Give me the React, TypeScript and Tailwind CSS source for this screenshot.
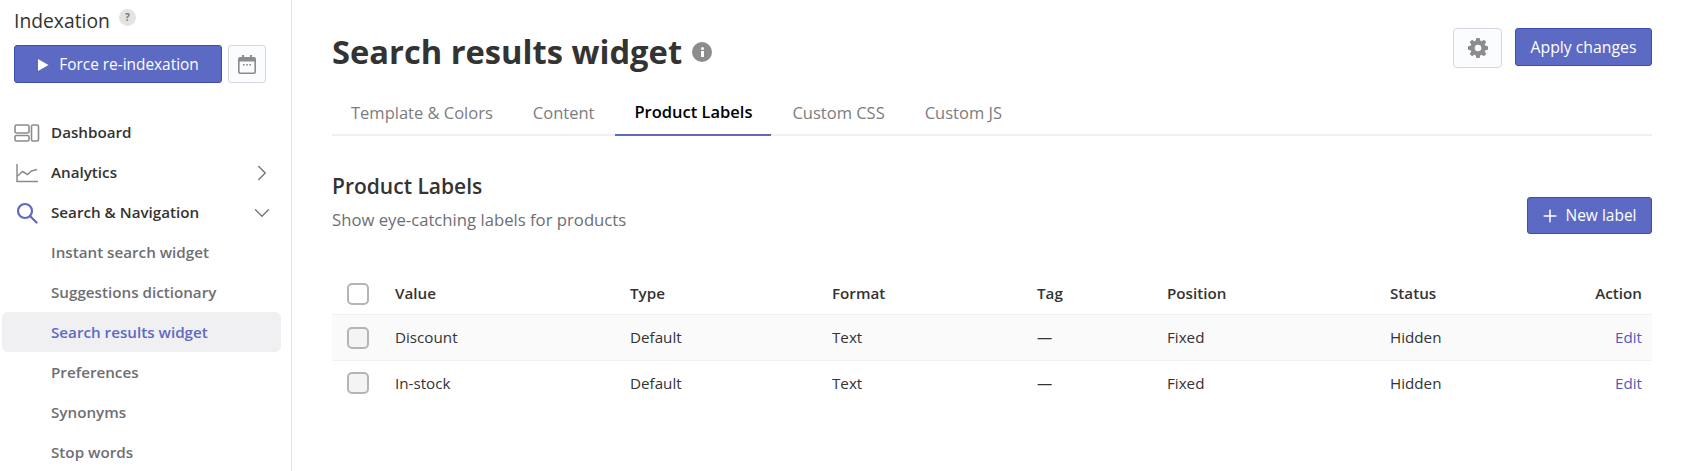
import React from "react";
import { ChevronDown, ChevronRight, Plus } from "lucide-react";

const tabs = ["Template & Colors", "Content", "Product Labels", "Custom CSS", "Custom JS"];
const subItems = ["Instant search widget", "Suggestions dictionary", "Search results widget", "Preferences", "Synonyms", "Stop words"];
const rows = [
  { value: "Discount", striped: true },
  { value: "In-stock", striped: false },
];
const tableCols = "grid grid-cols-[63px_235px_202px_205px_130px_223px_1fr_auto]";

function DashboardIcon() {
  return (
    <svg width="26" height="18" viewBox="0 0 26 18" fill="none" stroke="#8c8c8f" strokeWidth="1.6">
      <rect x="1" y="1" width="14" height="8" rx="1.5" />
      <rect x="1" y="11.5" width="14" height="5.5" rx="1.5" />
      <rect x="17.5" y="1" width="7" height="16" rx="1.5" />
    </svg>
  );
}

function AnalyticsIcon() {
  return (
    <svg width="24" height="20" viewBox="0 0 24 20" fill="none" stroke="#8c8c8f" strokeWidth="1.5">
      <path d="M2 1v17.5h21" />
      <path d="M2.5 13l5-4.5 5 3 4-3.5 5.5-1.5" />
    </svg>
  );
}

function SearchIcon() {
  return (
    <svg width="22" height="22" viewBox="0 0 22 22" fill="none" stroke="#5c6ac4" strokeWidth="2.2">
      <circle cx="9" cy="9" r="7" />
      <path d="M14 14l6.5 6.5" strokeLinecap="round" />
    </svg>
  );
}

function CalendarIcon() {
  return (
    <svg width="18" height="19" viewBox="0 0 18 19">
      <path d="M4 0h2v2h6V0h2v2h2a2 2 0 0 1 2 2v13a2 2 0 0 1-2 2H2a2 2 0 0 1-2-2V4a2 2 0 0 1 2-2h2z" fill="#8c8c8f" />
      <rect x="1.6" y="6.5" width="14.8" height="10.9" rx="0.6" fill="#fbfcfe" />
      <rect x="5" y="9" width="1.6" height="1.6" fill="#8c8c8f" />
      <rect x="8.2" y="9" width="1.6" height="1.6" fill="#8c8c8f" />
      <rect x="11.4" y="9" width="1.6" height="1.6" fill="#8c8c8f" />
    </svg>
  );
}

function GearIcon() {
  return (
    <svg width="20" height="20" viewBox="0 0 24 24" fill="#8c8c8f">
      <path
        fillRule="evenodd"
        d="M10 1h4l.6 3.1 1.9.8L19.1 3 22 5.9l-1.9 2.6.8 1.9L24 11v4l-3.1.6-.8 1.9 1.9 2.6L19.1 23l-2.6-1.9-1.9.8L14 25h-4l-.6-3.1-1.9-.8L4.9 23 2 20.1l1.9-2.6-.8-1.9L0 15v-4l3.1-.6.8-1.9L2 5.9 4.9 3l2.6 1.900 1.900-.8L10 1zm2 8a4 4 0 1 0 0 8 4 4 0 0 0 0-8z"
        transform="translate(0 -1)"
      />
    </svg>
  );
}

function Sidebar() {
  return (
    <aside className="w-[292px] h-[471px] shrink-0 overflow-hidden border-r border-[#e3e3e6]">
      <div className="pl-[14px] pt-[8px] flex items-start gap-[9px]">
        <span className="text-[19.3px] leading-[26px] text-[#333]">Indexation</span>
        <span className="mt-[1px] w-[17px] h-[17px] rounded-full bg-[#e3e3e3] text-[#777] text-[10px] font-bold flex items-center justify-center">?</span>
      </div>
      <div className="pl-[14px] mt-[11px] flex gap-[6px]">
        <button className="w-[208px] h-[38px] pt-[1px] rounded-[3px] bg-[#5c6ac4] border border-[#3f4eae] text-white text-[15.4px] flex items-center justify-center gap-[10px]">
          <svg width="12" height="14" viewBox="0 0 12 14" fill="#fff"><path d="M1 1v12l10.5-6z" /></svg>
          Force re-indexation
        </button>
        <button className="w-[38px] h-[38px] rounded-[3px] bg-[#fbfcfe] border border-[#d3d8e0] flex items-center justify-center">
          <CalendarIcon />
        </button>
      </div>
      <nav className="mt-[29px] text-[15.2px] font-semibold">
        <div className="h-[40px] pl-[14px] pt-[1px] flex items-center gap-[11px] text-[#333]">
          <span className="w-[26px] flex justify-center"><DashboardIcon /></span>
          Dashboard
        </div>
        <div className="h-[40px] pl-[14px] pr-[16px] pt-[1px] flex items-center gap-[11px] text-[#333]">
          <span className="w-[26px] flex justify-center"><AnalyticsIcon /></span>
          <span className="flex-1">Analytics</span>
          <ChevronRight size={26} strokeWidth={1.3} color="#777" />
        </div>
        <div className="h-[40px] pl-[14px] pr-[16px] pt-[1px] flex items-center gap-[11px] text-[#333]">
          <span className="w-[26px] flex justify-center"><SearchIcon /></span>
          <span className="flex-1">Search &amp; Navigation</span>
          <ChevronDown size={26} strokeWidth={1.3} color="#777" />
        </div>
        {subItems.map((item) => {
          const active = item === "Search results widget";
          return (
            <div
              key={item}
              className={
                active
                  ? "h-[40px] ml-[2px] mr-[10px] pl-[49px] pt-[1px] flex items-center rounded-[6px] bg-[#f0f0f2] text-[#5c6ac4]"
                  : "h-[40px] pl-[51px] pt-[1px] flex items-center text-[#6e6e73]"
              }
            >
              {item}
            </div>
          );
        })}
      </nav>
    </aside>
  );
}

function Header() {
  return (
    <div className="flex justify-between items-start pt-[28px]">
      <div className="flex items-center gap-[10px] h-[50px] -mt-[1px]">
        <h1 className="text-[32.7px] font-bold leading-[50px] text-[#333]">Search results widget</h1>
        <span className="w-[20px] h-[20px] rounded-full bg-[#8c8c8f] flex flex-col items-center justify-center gap-[1px]">
          <span className="w-[3px] h-[3px] rounded-full bg-white" />
          <span className="w-[3px] h-[6px] bg-white" />
        </span>
      </div>
      <div className="flex gap-[13px]">
        <button className="w-[49px] h-[40px] rounded-[4px] bg-[#fbfcfe] border border-[#d3d8e0] flex items-center justify-center">
          <GearIcon />
        </button>
        <button className="w-[137px] h-[38px] pt-[2px] rounded-[3px] bg-[#5c6ac4] border border-[#3f4eae] text-white text-[15.8px]">
          Apply changes
        </button>
      </div>
    </div>
  );
}

function Tabs() {
  return (
    <div className="mt-[17px] h-[42px] flex gap-[2px] border-b-2 border-[#f0f0f2]">
      {tabs.map((tab) => (
        <div
          key={tab}
          className={
            tab === "Product Labels"
              ? "h-[42px] px-[19px] pb-[3px] flex items-center text-[16.5px] font-semibold text-black border-b-2 border-[#5c6ac4]"
              : "h-[42px] px-[19px] pb-[3px] flex items-center text-[16.5px] text-[#7c7c80]"
          }
        >
          {tab}
        </div>
      ))}
    </div>
  );
}

function Checkbox({ muted }: { muted?: boolean }) {
  return (
    <span className={muted ? "block ml-[15px] w-[22px] h-[22px] rounded-[5px] border-2 border-[#b5b5b5] bg-[#f4f4f4]" : "block ml-[15px] w-[22px] h-[22px] rounded-[5px] border-2 border-[#b5b5b5] bg-white"} />
  );
}

function LabelsTable() {
  return (
    <div className="mt-[36px] text-[15.2px] text-[#333]">
      <div className={tableCols + " h-[45px] pt-[3px] items-center font-semibold border-b border-[#f0f0f2]"}>
        <Checkbox />
        <span>Value</span>
        <span>Type</span>
        <span>Format</span>
        <span>Tag</span>
        <span>Position</span>
        <span>Status</span>
        <span className="pr-[10px]">Action</span>
      </div>
      {rows.map((row) => (
        <div
          key={row.value}
          className={tableCols + (row.striped ? " h-[46px] items-center bg-[#fafafa] border-b border-[#f0f0f2]" : " h-[46px] pb-[2px] items-center")}
        >
          <Checkbox muted />
          <span>{row.value}</span>
          <span>Default</span>
          <span>Text</span>
          <span>—</span>
          <span>Fixed</span>
          <span>Hidden</span>
          <a className="pr-[10px] text-right text-[#4d5bbd]">Edit</a>
        </div>
      ))}
    </div>
  );
}

export default function App() {
  return (
    <div className="flex h-[471px] overflow-hidden bg-white" style={{ fontFamily: '"Open Sans", "Noto Sans", sans-serif' }}>
      <Sidebar />
      <main className="flex-1 pl-[40px] pr-[45px]">
        <Header />
        <Tabs />
        <div className="mt-[34px] flex justify-between items-end">
          <div>
            <h2 className="text-[21px] leading-[32px] font-semibold text-[#333]">Product Labels</h2>
            <p className="mt-[4px] text-[16.7px] leading-[28px] text-[#6e6e73]">Show eye-catching labels for products</p>
          </div>
          <button className="w-[125px] h-[37px] pr-[2px] rounded-[3px] bg-[#5c6ac4] border border-[#3f4eae] text-white text-[15.5px] flex items-center justify-center gap-[5px]">
            <Plus size={20} strokeWidth={1.8} />
            New label
          </button>
        </div>
        <LabelsTable />
      </main>
    </div>
  );
}
